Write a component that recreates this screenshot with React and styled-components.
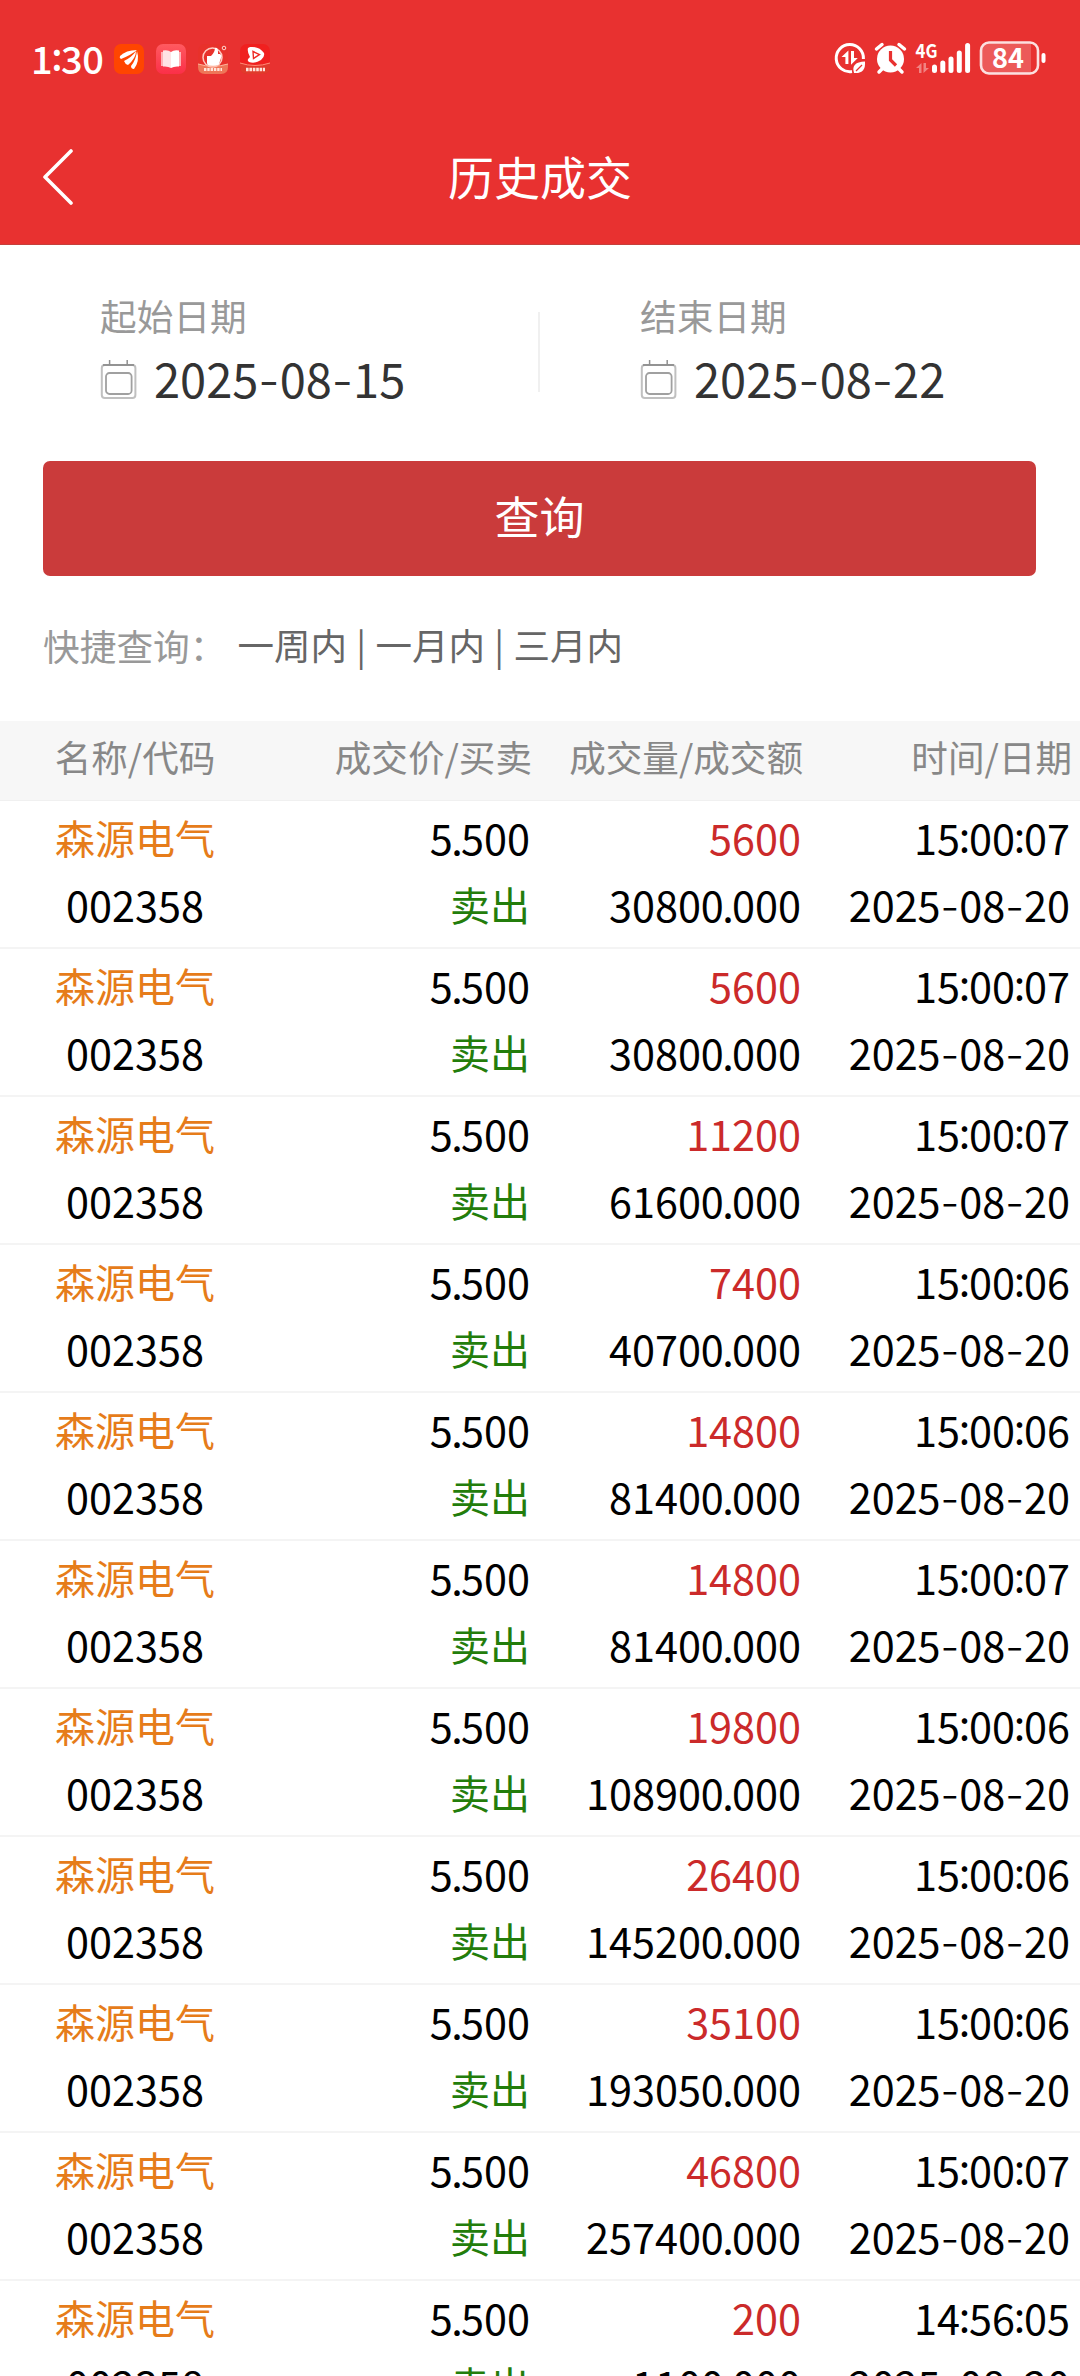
import React from 'react';
import styled, { createGlobalStyle } from 'styled-components';

const GlobalStyle = createGlobalStyle`
  * {
    box-sizing: border-box;
  }
  body {
    margin: 0;
    background: #fff;
    font-family: "Noto Sans CJK SC", "Noto Sans", sans-serif;
  }
`;

const Screen = styled.div`
  width: 1080px;
  height: 2376px;
  overflow: hidden;
  background: #fff;
`;

const Header = styled.header`
  height: 245px;
  background: #e83130;
  color: #fff;
  border-bottom: 1px solid #c5403c;
`;

const StatusBar = styled.div`
  display: flex;
  align-items: center;
  justify-content: space-between;
  height: 118px;
  padding: 0 32px 0 31px;
`;

const StatusLeft = styled.div`
  display: flex;
  align-items: center;
  gap: 12px;
`;

const Clock = styled.span`
  width: 71px;
  font-size: 38px;
  font-weight: 500;
  line-height: 54px;
  letter-spacing: -0.4px;
  padding-bottom: 2px;
  white-space: nowrap;
`;

const StatusRight = styled.svg`
  width: 214px;
  height: 40px;
  display: block;
  overflow: visible;
`;

const TitleBar = styled.div`
  display: grid;
  grid-template-columns: 120px 1fr 120px;
  align-items: center;
  height: 118px;
`;

const BackButton = styled.button`
  border: 0;
  padding: 0 0 0 42px;
  background: none;
  display: flex;
`;

const Title = styled.h1`
  margin: 0;
  font-size: 46px;
  font-weight: 400;
  line-height: 60px;
  padding-bottom: 4px;
  text-align: center;
`;

const DateRow = styled.section`
  display: flex;
  align-items: center;
  height: 216px;
`;

const DateField = styled.div`
  flex: 1;
  padding: 0 0 11px 100px;
`;

const DateLabel = styled.div`
  font-size: 36.7px;
  line-height: 60px;
  color: #999;
`;

const DateValue = styled.div`
  display: flex;
  align-items: center;
  gap: 17px;
  font-size: 47px;
  line-height: 66px;
  color: #333;

  svg {
    margin-top: 2px;
  }
`;

const Divider = styled.div`
  width: 2px;
  height: 80px;
  margin: 0 0 2px -2px;
  background: #f0f0f0;
`;

const QueryButton = styled.button`
  display: block;
  width: 993px;
  height: 115px;
  margin: 0 0 0 43px;
  padding: 0 0 6px;
  border: 0;
  border-radius: 7px;
  background: #ca3b3b;
  color: #fff;
  font-family: inherit;
  font-size: 45px;
`;

const QuickRow = styled.div`
  display: flex;
  align-items: center;
  height: 145px;
  padding: 0 0 8px 43px;
  font-size: 36.7px;
  color: #999;
`;

const QuickLinks = styled.div`
  display: flex;
  padding-left: 11px;
  font-size: 36.5px;
  color: #666;
`;

const Bar = styled.span`
  width: 28.5px;
  text-align: center;
`;

const columns = `
  display: grid;
  grid-template-columns: 270px 270px 271px 269px;
`;

const TableHead = styled.div`
  ${columns}
  height: 80px;
  background: #f7f7f7;
  border-bottom: 1px solid #f0f0f0;
  font-size: 36.6px;
  line-height: 72px;
  color: #888;
`;

const HeadCell = styled.div`
  text-align: ${(props) => (props.$center ? 'center' : 'right')};
  padding-right: ${(props) => (props.$center ? '0' : '8px')};
`;

const Row = styled.div`
  ${columns}
  height: 148px;
  padding-top: 3px;
  border-bottom: 2px solid #f4f4f4;
`;

const Cell = styled.div`
  text-align: ${(props) => (props.$center ? 'center' : 'right')};
  padding-right: ${(props) => (props.$center ? '0' : '10px')};
`;

const Line = styled.div`
  height: 67px;
  font-size: ${(props) => (props.$cjk ? '40px' : '41.4px')};
  line-height: 67px;
  color: ${(props) => props.$color || '#000'};
  white-space: nowrap;
`;

const Dash = styled.span`
  font-family: Inter, sans-serif;
  font-weight: 300;
  line-height: 1;
`;

const Colon = styled.span`
  line-height: 1;
  vertical-align: 0.07em;
  margin: 0 -0.03em;
`;

const Dot = styled.span`
  margin: 0 -0.04em;
`;

const trades = [
  ['5600', '30800.000', '15:00:07'],
  ['5600', '30800.000', '15:00:07'],
  ['11200', '61600.000', '15:00:07'],
  ['7400', '40700.000', '15:00:06'],
  ['14800', '81400.000', '15:00:06'],
  ['14800', '81400.000', '15:00:07'],
  ['19800', '108900.000', '15:00:06'],
  ['26400', '145200.000', '15:00:06'],
  ['35100', '193050.000', '15:00:06'],
  ['46800', '257400.000', '15:00:07'],
  ['200', '1100.000', '14:56:05'],
];

// wider hyphens, raised colons and tight decimal points
const Digits = ({ children }) => (
  <span>
    {children.split(/([-:.])/).map((part, i) => {
      if (part === '-') return <Dash key={i}>-</Dash>;
      if (part === ':') return <Colon key={i}>:</Colon>;
      if (part === '.') return <Dot key={i}>.</Dot>;
      return part;
    })}
  </span>
);

const CalendarIcon = () => (
  <svg width="37" height="40" viewBox="0 0 37 40" fill="none">
    <rect x="1.8" y="6" width="33.6" height="33" rx="3" stroke="#c0c0c0" strokeWidth="2" />
    <path d="M3 6H34" stroke="#858585" strokeWidth="1.5" />
    <rect x="6" y="14" width="25.6" height="21" rx="3.5" stroke="#a0a0a0" strokeWidth="1.8" />
    <path d="M9.6 1V6M27.2 1V6" stroke="#909090" strokeWidth="1.5" />
  </svg>
);

const AppIcons = () => (
  <svg width="156" height="30" viewBox="0 0 156 30">
    <defs>
      <linearGradient id="book" x1="0" y1="0" x2="0" y2="1">
        <stop offset="0" stopColor="#ff5a60" />
        <stop offset="1" stopColor="#fb2f48" />
      </linearGradient>
    </defs>
    <rect width="30" height="30" rx="7" fill="#ff4500" />
    <path d="M6 12Q12 6 23 6Q17 11 7 15Q5 14 6 12Z" fill="#fff" />
    <path d="M10 17Q18 13 22 7Q22 14 14 21Q11 20 10 17Z" fill="#fff" />
    <path d="M17 22Q22 16 23 7Q26 17 20 25Q17 25 17 22Z" fill="#fff" />
    <rect x="42" width="30" height="30" rx="7" fill="url(#book)" />
    <path d="M47 8H52V22H47ZM62 8H67V22H62Z" fill="#ffb3b8" />
    <path d="M49 6.5Q54 5.5 57 8V24Q54 22 49 22.5Z" fill="#ffe3e5" />
    <path d="M65 6.5Q60 5.5 57 8V24Q60 22 65 22.5Z" fill="#fff" />
    <rect x="84" width="30" height="30" rx="7" fill="#e8312b" />
    <path d="M84 20Q99 24 114 20V23Q114 30 107 30H91Q84 30 84 23Z" fill="#ee7658" />
    <circle cx="98.500" cy="13.500" r="9.500" fill="none" stroke="#ffc9c0" strokeWidth="1.500" />
    <path d="M93 12H97Q101 8 101 4Q104 3 104 8L104 10H106Q108 11 107 14L105 20Q104 22 100 22H95Q93 21 93 19Z" fill="#fff" />
    <circle cx="110" cy="4" r="1.800" fill="none" stroke="#ffd7d0" />
    <path d="M84 20Q99 24.500 114 20" fill="none" stroke="#ffb49c" />
    <path d="M90 25.500H108" stroke="#ffe4da" strokeWidth="3" strokeDasharray="2.400 0.900" />
    <rect x="126" width="30" height="30" rx="7" fill="#f0201f" />
    <path d="M126 19Q141 24 156 19V23Q156 30 149 30H133Q126 30 126 23Z" fill="#e03a2c" />
    <path d="M136 3Q145 2 150 9Q151 13 147 16Q141 20 135 18Q132 16 136 13Q133 8 134 4Z" fill="#fff" />
    <path d="M139 7.500L145.500 10.500L139.500 14.500Z" fill="#fff" stroke="#ee2a25" strokeWidth="1.400" />
    <path d="M126 19Q141 24 156 19" fill="none" stroke="#ff8e78" />
    <path d="M132 25.500H151" stroke="#ffe4da" strokeWidth="3.500" strokeDasharray="2.600 0.800" />
  </svg>
);

const SystemIcons = () => (
  <StatusRight viewBox="834 40 214 40">
    {/* data saver */}
    <path d="M852 72.600A13.600 13.600 0 1 1 863.400 60" fill="none" stroke="#fff" strokeWidth="3" />
    <path d="M848.400 51.500V65H845.400V58H841.500ZM851 52H854V59H857.800L851 65.800Z" fill="#fff" />
    <path d="M854 74Q850.500 63 865 62.500Q866 75 854 74Z" fill="#fff" />
    <path d="M856 72L862 66" stroke="#e83130" strokeWidth="1.200" />
    {/* alarm */}
    <circle cx="890.500" cy="60" r="13.500" fill="#fff" />
    <path d="M876.500 50L882 45.500M904.500 50L899 45.500M882 70L879 73M899 70L902 73" stroke="#fff" strokeWidth="3.500" strokeLinecap="round" />
    <path d="M890.500 52V61L896 66.500" fill="none" stroke="#e83130" strokeWidth="3.200" />
    {/* signal */}
    <text x="915.500" y="58.500" fontSize="19" fontWeight="700" fill="#fff" textLength="22" lengthAdjust="spacingAndGlyphs">4G</text>
    <path d="M921.500 64V74H919V69H916ZM923.500 64H926V69H929L923.500 74Z" fill="#fff" fillOpacity="0.4" />
    <path d="M934.500 68V71.500M942.800 64V71.500M951 60V71.500M959.300 54V71.500M967.600 46.500V71.500" stroke="#fff" strokeWidth="5" strokeLinecap="round" />
    {/* battery */}
    <path d="M989 44.500H1031V74H989Q982 74 982 67V51Q982 44.500 989 44.500Z" fill="#fff" fillOpacity="0.2" />
    <rect x="981" y="43.500" width="57" height="31" rx="8" fill="none" stroke="#fff" strokeOpacity="0.85" strokeWidth="2.600" />
    <rect x="1041.500" y="54" width="4" height="10" rx="2" fill="#fff" />
    <text x="992" y="69" fontSize="27.500" fontWeight="700" fill="#fff" textLength="32" lengthAdjust="spacingAndGlyphs">84</text>
  </StatusRight>
);

const App = () => {
  return (
    <Screen>
      <GlobalStyle />
      <Header>
        <StatusBar>
          <StatusLeft>
            <Clock>
              <Digits>1:30</Digits>
            </Clock>
            <AppIcons />
          </StatusLeft>
          <SystemIcons />
        </StatusBar>
        <TitleBar>
          <BackButton aria-label="返回">
            <svg width="33" height="56" viewBox="0 0 33 56" fill="none">
              <path d="M29 2L3 28L29 54" stroke="#fff" strokeWidth="3.6" strokeLinecap="round" strokeLinejoin="round" />
            </svg>
          </BackButton>
          <Title>历史成交</Title>
        </TitleBar>
      </Header>
      <DateRow>
        <DateField>
          <DateLabel>起始日期</DateLabel>
          <DateValue>
            <CalendarIcon />
            <Digits>2025-08-15</Digits>
          </DateValue>
        </DateField>
        <Divider />
        <DateField>
          <DateLabel>结束日期</DateLabel>
          <DateValue>
            <CalendarIcon />
            <Digits>2025-08-22</Digits>
          </DateValue>
        </DateField>
      </DateRow>
      <QueryButton>查询</QueryButton>
      <QuickRow>
        快捷查询：
        <QuickLinks>
          <span>一周内</span>
          <Bar>|</Bar>
          <span>一月内</span>
          <Bar>|</Bar>
          <span>三月内</span>
        </QuickLinks>
      </QuickRow>
      <TableHead>
        <HeadCell $center>名称/代码</HeadCell>
        <HeadCell>成交价/买卖</HeadCell>
        <HeadCell>成交量/成交额</HeadCell>
        <HeadCell>时间/日期</HeadCell>
      </TableHead>
      {trades.map(([volume, amount, time], i) => (
        <Row key={i}>
          <Cell $center>
            <Line $cjk $color="#e67c1a">森源电气</Line>
            <Line>002358</Line>
          </Cell>
          <Cell>
            <Line>
              <Digits>5.500</Digits>
            </Line>
            <Line $cjk $color="#237d0b">卖出</Line>
          </Cell>
          <Cell>
            <Line $color="#cb2a2a">{volume}</Line>
            <Line>
              <Digits>{amount}</Digits>
            </Line>
          </Cell>
          <Cell>
            <Line>
              <Digits>{time}</Digits>
            </Line>
            <Line>
              <Digits>2025-08-20</Digits>
            </Line>
          </Cell>
        </Row>
      ))}
    </Screen>
  );
};

export default App;
